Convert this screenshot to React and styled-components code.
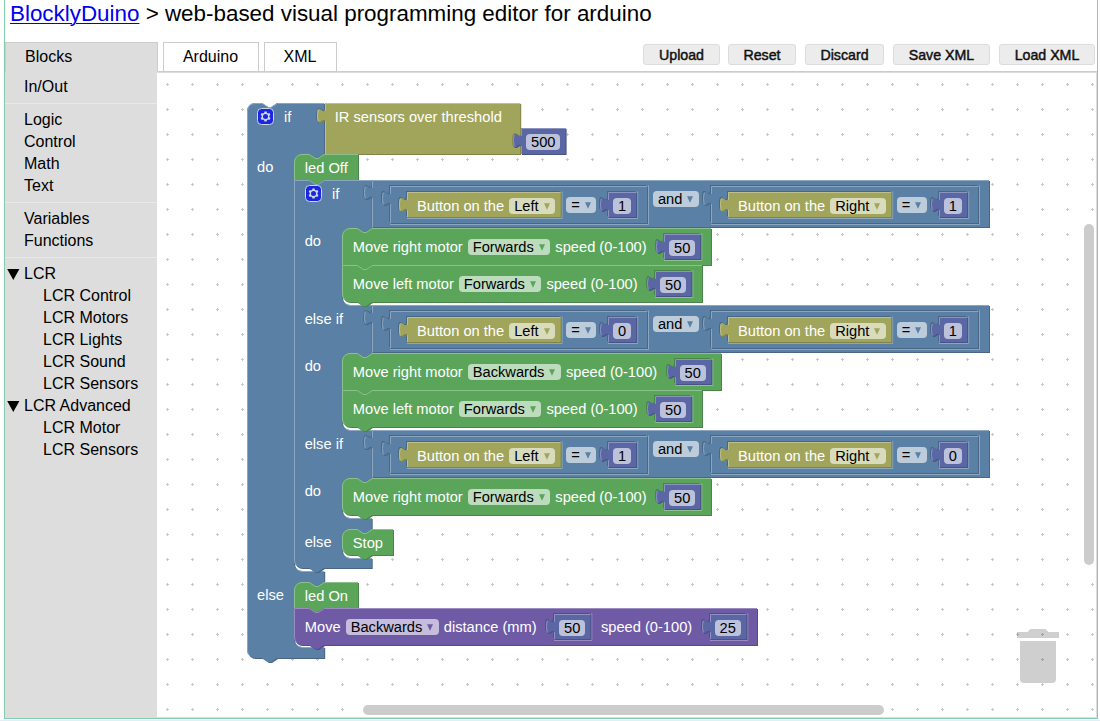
import React from 'react';
import styled, { createGlobalStyle } from 'styled-components';

const GlobalStyle = createGlobalStyle`
  * { box-sizing: border-box; }
  html, body { margin: 0; height: 100%; overflow: hidden; background: #fff; }
  body { font-family: "Liberation Sans", Arial, sans-serif; color: #000; }
  #root { height: 100%; }
`;

const BLUE = '#5b80a5';
const OLIVE = '#a0a55b';
const GREEN = '#5ba55b';
const INDIGO = '#5b67a5';
const PURPLE = '#6f5ba5';

const mix = (hex, target, amount) => {
  const parts = [1, 3, 5].map((i) => parseInt(hex.slice(i, i + 2), 16));
  return `rgb(${parts.map((c) => Math.round(c + (target - c) * amount)).join(',')})`;
};
const light = (hex) => mix(hex, 255, 0.3);
const dark = (hex) => mix(hex, 0, 0.2);

/* ---------- page frame ---------- */

const Page = styled.div`
  height: 721px;
  padding: 0 2px 0 4px;
  border-bottom: 1px solid #e6ebf7;
`;

const Frame = styled.div`
  height: 719px;
  border: solid #82ceae;
  border-width: 0 1px 1px;
  display: flex;
  flex-direction: column;
`;

const Title = styled.h1`
  margin: 0;
  height: 42px;
  padding-left: 5px;
  font-size: 22.4px;
  font-weight: 400;
  line-height: 27px;
  white-space: nowrap;
  a { color: #0000ee; text-decoration-thickness: 1px; text-underline-offset: 2px; }
`;

const TopBar = styled.div`
  display: flex;
  height: 30px;
`;

const Tab = styled.div`
  width: ${(p) => p.$width}px;
  height: 30px;
  border: 1px solid #ccc;
  border-bottom-color: ${(p) => (p.$active ? '#ddd' : '#ccc')};
  background: ${(p) => (p.$active ? '#ddd' : '#fff')};
  padding-left: ${(p) => (p.$active ? 19 : 0)}px;
  padding-right: ${(p) => (p.$active ? 0 : 1)}px;
  text-align: ${(p) => (p.$active ? 'left' : 'center')};
  font-size: 16px;
  line-height: 27px;
`;

const TabGap = styled.div`
  width: 5px;
  border-bottom: 1px solid #ccc;
`;

const Actions = styled.div`
  flex: 1;
  display: flex;
  justify-content: flex-end;
  gap: 9px;
  padding: 2px 2px 0 0;
  border-bottom: 1px solid #ccc;
`;

const ActionButton = styled.button`
  width: ${(p) => p.$width}px;
  height: 21px;
  padding: 0;
  border: 1px solid #dcdcdc;
  border-radius: 3px;
  background: #ececec;
  color: #111;
  font: 400 14.2px/18px "Liberation Sans", Arial, sans-serif;
  -webkit-text-stroke: 0.45px #111;
  &:first-child { margin-right: -1px; }
`;

const Main = styled.div`
  flex: 1;
  display: flex;
  min-height: 0;
`;

/* ---------- toolbox ---------- */

const Toolbox = styled.nav`
  width: 152px;
  padding-top: 4px;
  background: #ddd;
`;

const Category = styled.div`
  display: flex;
  align-items: center;
  height: 22px;
  padding-left: ${(p) => (p.$child ? 38 : 2)}px;
  font-size: 16px;
  line-height: 22px;
`;

const Twisty = styled.span`
  width: 17px;
  height: 11px;
  svg { display: block; }
`;

const Separator = styled.div`
  height: 1px;
  margin: 5px 0;
  background: #e8e8e8;
`;

/* ---------- workspace ---------- */

const Workspace = styled.section`
  position: relative;
  flex: 1;
  border: solid #ddd;
  border-width: 1px 1px 1px 0;
  background: #fff;
  overflow: hidden;
`;

const Grid = styled.svg`
  position: absolute;
  inset: 0;
  width: 100%;
  height: 100%;
`;

/* Origin of the block coordinates within the workspace. */
const Canvas = styled.div`
  position: absolute;
  left: -157px;
  top: -73px;
`;

const Node = styled.div`
  position: absolute;
  left: ${(p) => p.$x}px;
  top: ${(p) => p.$y}px;
  width: ${(p) => p.$w}px;
  height: ${(p) => p.$h}px;
  --text-top: ${(p) => (p.$inline ? 11 : 6)}px;
`;

const Value = styled.div`
  position: relative;
  flex: none;
  width: ${(p) => p.$w}px;
  height: ${(p) => p.$h}px;
  margin-top: 6px;
  margin-left: ${(p) => p.$lead || 0}px;
  --text-top: ${(p) => (p.$inline ? 11 : 6)}px;
`;

const Shape = styled.svg`
  position: absolute;
  left: 0;
  top: 0;
  width: 100%;
  height: 100%;
  overflow: visible;
`;

const Fields = styled.div`
  position: relative;
  display: flex;
  align-items: flex-start;
  padding-left: ${(p) => p.$pad ?? 10.8}px;
  gap: ${(p) => p.$gap ?? 5}px;
  color: #fff;
  font-size: 14.667px;
  line-height: 16px;
  white-space: nowrap;
`;

const Label = styled.span`
  margin-top: var(--text-top);
`;

const Pill = styled.span`
  display: flex;
  height: 16px;
  margin-top: var(--text-top);
  margin-left: ${(p) => p.$lead || 0}px;
  padding: 0 5px;
  border-radius: 4px;
  background: rgba(255, 255, 255, 0.6);
  color: #000;
`;

const Arrow = styled.svg`
  width: 6px;
  height: 7px;
  margin: 4.5px 0.6px 0 4.9px;
`;

const Caption = styled.span`
  position: absolute;
  left: ${(p) => p.$x}px;
  top: ${(p) => p.$y}px;
  color: #fff;
  font-size: 14.667px;
  line-height: 16px;
  white-space: nowrap;
`;

const GearIcon = styled.svg`
  position: absolute;
  left: ${(p) => p.$x}px;
  top: ${(p) => p.$y}px;
  width: 17px;
  height: 17px;
  overflow: visible;
  opacity: 0.7;
`;

const TrashCan = styled.svg`
  position: absolute;
  left: 860px;
  top: 555px;
`;

const ScrollThumb = styled.div`
  position: absolute;
  left: ${(p) => p.$x}px;
  top: ${(p) => p.$y}px;
  width: ${(p) => p.$w}px;
  height: ${(p) => p.$h}px;
  border-radius: 5px;
  background: #ccc;
`;

/* ---------- block outlines ---------- */

const Outline = ({ color, d, shine }) => (
  <>
    <path d={d} fill={dark(color)} transform="translate(1 1)" />
    <path d={d} fill={color} />
    <path d={shine} fill="none" stroke={light(color)} strokeWidth="1" strokeLinecap="round" />
  </>
);

const NOTCH = 'l 6,4 3,0 6,-4';
const NOTCH_BACK = 'l -6,4 -3,0 -6,-4';

const StatementShape = ({ w, h, color, first, last }) => {
  const top = first ? 'M 0,8 A 8,8 0 0 1 8,0' : 'M 0,0';
  const bottom = last ? 'H 8 a 8,8 0 0 1 -8,-8' : 'H 0';
  const d = `${top} H 15 ${NOTCH} H ${w} V ${h} H 30 ${NOTCH_BACK} ${bottom} Z`;
  const start = last ? `M 2.6,${h - 2.4} A 7.5,7.5 0 0 1 0.5,${h - 8}` : `M 0.5,${h - 0.5}`;
  const corner = first ? 'V 8 A 7.5,7.5 0 0 1 8,0.5' : 'V 0.5';
  return (
    <Shape>
      <Outline color={color} d={d} shine={`${start} ${corner} H 15.3 ${NOTCH} H ${w - 0.5}`} />
    </Shape>
  );
};

/* A value block sitting inside its parent is `boxed`: the parent's socket
   shows as a dark rim above and a light rim below. */
const ValueShape = ({ w, h, color, parent, boxed }) => {
  const d = `M 0,0 H ${w} V ${h} H 0 V 20 c 0,-10 -8,8 -8,-7.5 s 8,2.5 8,-7.5 Z`;
  const shine = `M 0.5,${h - 0.5} V 18.5 m -7.4,-0.5 q -1.5,-5.5 0,-11 m 7.4,0.5 V 0.5 H ${w - 0.5}`;
  return (
    <Shape>
      {boxed && (
        <>
          <path d={d} fill={dark(parent)} transform="translate(-1 -1)" />
          <path
            d={`M ${w + 1.5},-0.5 V ${h + 1.5} H 0 M -5.5,19 l 4,-2.4`}
            fill="none"
            stroke={light(parent)}
          />
        </>
      )}
      {parent && !boxed && (
        <path
          d="M 0,20 c 0,-10 -8,8 -8,-7.5 s 8,2.5 8,-7.5"
          fill="none"
          stroke={dark(parent)}
          strokeWidth="1.6"
        />
      )}
      <Outline color={color} d={d} shine={shine} />
    </Shape>
  );
};

/* `arms` lists, for each statement mouth, where it opens, where it closes
   and where the header below it ends. */
const IfShape = ({ w, inner, arms, first }) => {
  const end = arms[arms.length - 1].to;
  const mouths = arms
    .map(
      ({ open, close, to }) =>
        `V ${open} H ${inner + 30} ${NOTCH_BACK} h -7 a 8,8 0 0 0 -8,8 V ${close - 8} a 8,8 0 0 0 8,8 H ${w} V ${to}`,
    )
    .join(' ');
  const d = `${first ? 'M 0,8 A 8,8 0 0 1 8,0' : 'M 0,0'} H 15 ${NOTCH} H ${w} ${mouths} H 30 ${NOTCH_BACK} H 8 a 8,8 0 0 1 -8,-8 Z`;
  const shine =
    `M 2.6,${end - 2.4} A 7.5,7.5 0 0 1 0.5,${end - 8} ` +
    (first ? 'V 8 A 7.5,7.5 0 0 1 8,0.5' : 'V 0.5') +
    ` H 15.3 ${NOTCH} H ${w - 0.5} ` +
    arms
      .map(({ close }) => `M ${inner + 2.4},${close - 2.4} A 8.5,8.5 0 0 0 ${inner + 8},${close + 0.5} H ${w - 0.5}`)
      .join(' ');
  return (
    <Shape>
      <Outline color={BLUE} d={d} shine={shine} />
    </Shape>
  );
};

const Gear = ({ x, y }) => (
  <GearIcon viewBox="0 0 17 17" $x={x} $y={y}>
    <rect x="0.5" y="0.5" width="16" height="16" rx="4" fill="#00f" stroke="#fff" />
    <path
      transform="translate(0.5 0.5)"
      fill="#fff"
      d="m4.203,7.296 0,1.368 -0.92,0.677 -0.11,0.41 0.9,1.559 0.41,0.11 1.043,-0.457 1.187,0.683 0.127,1.134 0.3,0.3 1.8,0 0.3,-0.299 0.127,-1.138 1.185,-0.682 1.046,0.458 0.409,-0.11 0.9,-1.559 -0.11,-0.41 -0.92,-0.677 0,-1.366 0.92,-0.677 0.11,-0.41 -0.9,-1.559 -0.409,-0.109 -1.046,0.458 -1.185,-0.682 -0.127,-1.138 -0.3,-0.299 -1.8,0 -0.3,0.3 -0.126,1.135 -1.187,0.682 -1.043,-0.457 -0.41,0.11 -0.899,1.559 0.108,0.409z"
    />
    <circle cx="8.5" cy="8.5" r="2.5" fill="#00f" />
  </GearIcon>
);

/* ---------- blocks ---------- */

const Dropdown = ({ text, color, lead }) => (
  <Pill $lead={lead}>
    {text}
    <Arrow viewBox="0 0 6 7">
      <path d="M0,0.3 H6 L3,6.7 Z" fill={color} />
    </Arrow>
  </Pill>
);

const NumberValue = ({ value, lead, parent }) => {
  const w = 10 + 10 + String(value).length * 8.16;
  return (
    <Value $w={w} $h={25} $lead={lead}>
      <ValueShape w={w} h={25} color={INDIGO} parent={parent} boxed />
      <Fields $pad={5}>
        <Pill>{value}</Pill>
      </Fields>
    </Value>
  );
};

const ButtonValue = ({ side }) => {
  const w = side === 'Left' ? 153.6 : 163.2;
  return (
    <Value $w={w} $h={25}>
      <ValueShape w={w} h={25} color={OLIVE} parent={BLUE} boxed />
      <Fields $pad={10.4}>
        <Label>Button on the</Label>
        <Dropdown text={side} color={OLIVE} />
      </Fields>
    </Value>
  );
};

const Comparison = ({ side, value, lead }) => {
  const w = side === 'Left' ? 257 : 267;
  return (
    <Value $w={w} $h={37} $lead={lead} $inline>
      <ValueShape w={w} h={37} color={BLUE} parent={BLUE} boxed />
      <Fields $pad={16.4} $gap={0}>
        <ButtonValue side={side} />
        <Dropdown text="=" color={BLUE} lead={6} />
        <NumberValue value={value} lead={11.8} parent={BLUE} />
      </Fields>
    </Value>
  );
};

const AndNode = ({ y, left, right }) => (
  <Node $x={372} $y={y} $w={617} $h={47} $inline>
    <ValueShape w={617} h={47} color={BLUE} parent={BLUE} />
    <Fields $pad={18.2} $gap={0}>
      <Comparison side="Left" value={left} />
      <Dropdown text="and" color={BLUE} lead={5.7} />
      <Comparison side="Right" value={right} lead={12.4} />
    </Fields>
  </Node>
);

const LabelNode = ({ x, y, w, h = 26, text, last }) => (
  <Node $x={x} $y={y} $w={w} $h={h}>
    <StatementShape w={w} h={h} color={GREEN} first last={last} />
    <Fields>
      <Label>{text}</Label>
    </Fields>
  </Node>
);

const MotorNode = ({ y, w, motor, direction, first, last }) => (
  <Node $x={342} $y={y} $w={w} $h={37} $inline>
    <StatementShape w={w} h={37} color={GREEN} first={first} last={last} />
    <Fields>
      <Label>{`Move ${motor} motor`}</Label>
      <Dropdown text={direction} color={GREEN} />
      <Label>speed (0-100)</Label>
      <NumberValue value={50} lead={12.4} parent={GREEN} />
    </Fields>
  </Node>
);

const Program = () => (
  <Canvas>
    <Node $x={247} $y={103} $w={78} $h={555}>
      <IfShape
        first
        w={77.2}
        inner={47}
        arms={[
          { open: 51, close: 468, to: 479 },
          { open: 479, close: 544, to: 555 },
        ]}
      />
      <Gear x={10.3} y={5.2} />
      <Caption $x={37} $y={6}>if</Caption>
      <Caption $x={10} $y={56}>do</Caption>
      <Caption $x={10} $y={484}>else</Caption>
    </Node>
    <Node $x={325} $y={103} $w={195} $h={51}>
      <ValueShape w={195.2} h={51} color={OLIVE} parent={BLUE} />
      <Fields $pad={9.8}>
        <Label>IR sensors over threshold</Label>
      </Fields>
    </Node>
    <Node $x={521} $y={128} $w={45} $h={26}>
      <ValueShape w={44.6} h={26} color={INDIGO} parent={OLIVE} />
      <Fields $pad={5}>
        <Pill>500</Pill>
      </Fields>
    </Node>
    <LabelNode x={294} y={154} w={64} text="led Off" />

    <Node $x={294} $y={180} $w={78} $h={388}>
      <IfShape
        w={77.7}
        inner={48}
        arms={[
          { open: 48, close: 125, to: 173 },
          { open: 173, close: 250, to: 298 },
          { open: 298, close: 338, to: 349 },
          { open: 349, close: 378, to: 388 },
        ]}
      />
      <Gear x={11} y={5.4} />
      <Caption $x={38} $y={6}>if</Caption>
      <Caption $x={10.7} $y={53}>do</Caption>
      <Caption $x={10.7} $y={131}>else if</Caption>
      <Caption $x={10.7} $y={178}>do</Caption>
      <Caption $x={10.7} $y={256}>else if</Caption>
      <Caption $x={10.7} $y={303}>do</Caption>
      <Caption $x={10.7} $y={354}>else</Caption>
    </Node>
    <AndNode y={180} left={1} right={1} />
    <MotorNode y={228} w={369} motor="right" direction="Forwards" first />
    <MotorNode y={265} w={360} motor="left" direction="Forwards" last />
    <AndNode y={305} left={0} right={1} />
    <MotorNode y={353} w={379} motor="right" direction="Backwards" first />
    <MotorNode y={390} w={360} motor="left" direction="Forwards" last />
    <AndNode y={430} left={1} right={0} />
    <MotorNode y={478} w={369} motor="right" direction="Forwards" first last />
    <LabelNode x={342} y={529} w={51} text="Stop" last />

    <LabelNode x={294} y={582} w={64} text="led On" />
    <Node $x={294} $y={608} $w={463} $h={37} $inline>
      <StatementShape w={463} h={37} color={PURPLE} last />
      <Fields $gap={0}>
        <Label>Move</Label>
        <Dropdown text="Backwards" color={PURPLE} lead={5} />
        <Fields as="span" $pad={5}>
          <Label>distance (mm)</Label>
        </Fields>
        <NumberValue value={50} lead={17.4} parent={PURPLE} />
        <Fields as="span" $pad={10.6}>
          <Label>speed (0-100)</Label>
        </Fields>
        <NumberValue value={25} lead={17.4} parent={PURPLE} />
      </Fields>
    </Node>
  </Canvas>
);

const TOOLBOX = [
  ['In/Out'],
  ['Logic', 'Control', 'Math', 'Text'],
  ['Variables', 'Functions'],
];
const TREE = [
  { name: 'LCR', items: ['LCR Control', 'LCR Motors', 'LCR Lights', 'LCR Sound', 'LCR Sensors'] },
  { name: 'LCR Advanced', items: ['LCR Motor', 'LCR Sensors'] },
];
const ACTIONS = [
  ['Upload', 77],
  ['Reset', 68],
  ['Discard', 79],
  ['Save XML', 97],
  ['Load XML', 96],
];

export default function App() {
  return (
    <Page>
      <GlobalStyle />
      <Frame>
        <Title>
          <a href="#">BlocklyDuino</a> &gt; web-based visual programming editor for arduino
        </Title>
        <TopBar>
          <Tab $width={153} $active>Blocks</Tab>
          <TabGap />
          <Tab $width={96}>Arduino</Tab>
          <TabGap />
          <Tab $width={73}>XML</Tab>
          <Actions>
            {ACTIONS.map(([text, width]) => (
              <ActionButton key={text} $width={width}>{text}</ActionButton>
            ))}
          </Actions>
        </TopBar>
        <Main>
          <Toolbox>
            {TOOLBOX.map((group) => (
              <React.Fragment key={group[0]}>
                {group.map((name) => (
                  <Category key={name}>
                    <Twisty />
                    {name}
                  </Category>
                ))}
                <Separator />
              </React.Fragment>
            ))}
            {TREE.map(({ name, items }) => (
              <React.Fragment key={name}>
                <Category>
                  <Twisty>
                    <svg width="13" height="11" viewBox="0 0 13 11">
                      <path d="M0.2,0 H12.4 L6.3,11 Z" />
                    </svg>
                  </Twisty>
                  {name}
                </Category>
                {items.map((item) => (
                  <Category key={item} $child>{item}</Category>
                ))}
              </React.Fragment>
            ))}
          </Toolbox>
          <Workspace>
            <Grid>
              <defs>
                <pattern id="dots" width="25" height="25" x="9" y="10" patternUnits="userSpaceOnUse">
                  <path d="M0,1.5 H3 M1.5,0 V3" stroke="#c8c8c8" />
                </pattern>
              </defs>
              <rect width="100%" height="100%" fill="url(#dots)" />
            </Grid>
            <Program />
            <TrashCan width="42" height="56" viewBox="0 0 42 56" fill="rgba(0,0,0,0.19)">
              <path d="M0,4 H10.5 L13.5,1 H28.5 L31.5,4 H42 V10 H0 Z" />
              <path d="M3,13 H39 V51 a4,4 0 0 1 -4,4 H7 a4,4 0 0 1 -4,-4 Z" />
            </TrashCan>
            <ScrollThumb $x={927} $y={151} $w={10} $h={341} />
            <ScrollThumb $x={206} $y={632} $w={521} $h={10} />
          </Workspace>
        </Main>
      </Frame>
    </Page>
  );
}
